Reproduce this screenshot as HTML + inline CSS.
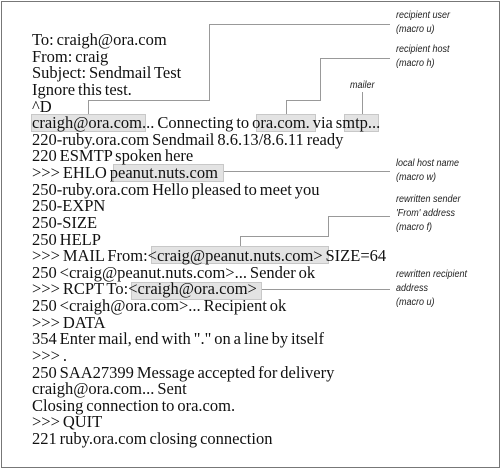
<!DOCTYPE html>
<html><head><style>
body{margin:0;width:502px;height:471px;background:#fff;position:relative;overflow:hidden}
#box{position:absolute;left:1px;top:1px;width:497px;height:465px;border:1.5px solid #777}
.t div{position:absolute;left:32px;font-family:"Liberation Serif",serif;font-size:16.5px;word-spacing:-1.2px;line-height:17px;height:17px;color:#111;white-space:pre}
.hl{position:absolute;background:#e3e3e3;border:1px solid #c8c8c8;box-sizing:border-box}
.lb{position:absolute;font-family:"Liberation Sans",sans-serif;font-style:italic;font-size:10px;line-height:14px;color:#222;transform:scaleX(0.9);transform-origin:left}
svg{position:absolute;left:0;top:0}
</style></head><body>
<div id="box"></div>
<div class="hl" style="left:31px;top:114px;width:115px;height:18px"></div>
<div class="hl" style="left:256px;top:114px;width:60px;height:18px"></div>
<div class="hl" style="left:344px;top:114px;width:35px;height:18px"></div>
<div class="hl" style="left:113px;top:164px;width:111px;height:18px"></div>
<div class="hl" style="left:151px;top:246px;width:178px;height:18px"></div>
<div class="hl" style="left:131px;top:282px;width:131px;height:18px"></div>
<svg width="502" height="471" fill="none" stroke="#999" stroke-width="1">
<path d="M88.5 114V100.5H209.5V24.5H390"/>
<path d="M286.5 114V100.5H320.5V58.5H390"/>
<path d="M362.5 114V92"/>
<path d="M224 171.5H390"/>
<path d="M240.5 246V236.5H328.5V216.5H390"/>
<path d="M262 289.5H390"/>
</svg>
<div class="t">
<div style="top:31px">To: craigh@ora.com</div>
<div style="top:48px">From: craig</div>
<div style="top:64px">Subject: Sendmail Test</div>
<div style="top:81px">Ignore this test.</div>
<div style="top:98px">^D</div>
<div style="top:114px">craigh@ora.com... Connecting to ora.com. via smtp...</div>
<div style="top:131px">220-ruby.ora.com Sendmail 8.6.13/8.6.11 ready</div>
<div style="top:147px">220 ESMTP spoken here</div>
<div style="top:164px">&gt;&gt;&gt; EHLO peanut.nuts.com</div>
<div style="top:181px">250-ruby.ora.com Hello pleased to meet you</div>
<div style="top:197px">250-EXPN</div>
<div style="top:214px">250-SIZE</div>
<div style="top:231px">250 HELP</div>
<div style="top:247px">&gt;&gt;&gt; MAIL From:&lt;craig@peanut.nuts.com&gt; SIZE=64</div>
<div style="top:264px">250 &lt;craig@peanut.nuts.com&gt;... Sender ok</div>
<div style="top:280px">&gt;&gt;&gt; RCPT To:&lt;craigh@ora.com&gt;</div>
<div style="top:297px">250 &lt;craigh@ora.com&gt;... Recipient ok</div>
<div style="top:314px">&gt;&gt;&gt; DATA</div>
<div style="top:330px">354 Enter mail, end with "." on a line by itself</div>
<div style="top:347px">&gt;&gt;&gt; .</div>
<div style="top:364px">250 SAA27399 Message accepted for delivery</div>
<div style="top:380px">craigh@ora.com... Sent</div>
<div style="top:397px">Closing connection to ora.com.</div>
<div style="top:413px">&gt;&gt;&gt; QUIT</div>
<div style="top:430px">221 ruby.ora.com closing connection</div>
</div>
<div class="lb" style="left:396px;top:9px">recipient user<br>(macro u)</div>
<div class="lb" style="left:396px;top:43px">recipient host<br>(macro h)</div>
<div class="lb" style="left:350px;top:79px">mailer</div>
<div class="lb" style="left:396px;top:157px">local host name<br>(macro w)</div>
<div class="lb" style="left:396px;top:193px">rewritten sender<br>'From' address<br>(macro f)</div>
<div class="lb" style="left:396px;top:268px">rewritten recipient<br>address<br>(macro u)</div>
</body></html>
